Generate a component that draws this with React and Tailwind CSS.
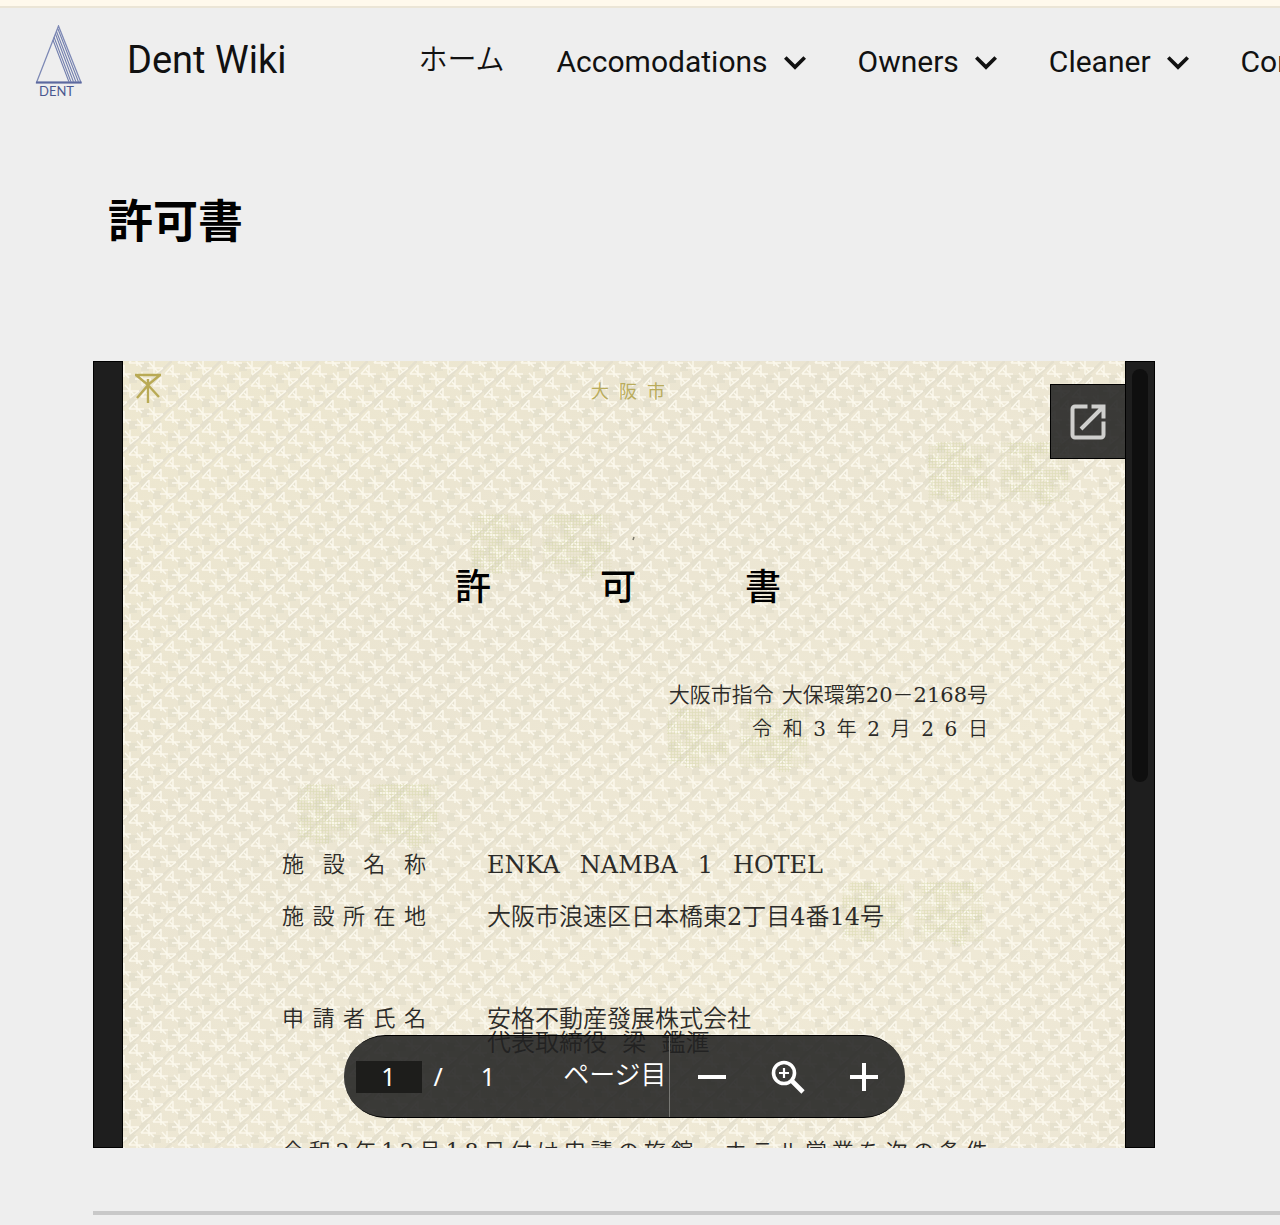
const navItems = [
  { label: 'ホーム', menu: false },
  { label: 'Accomodations', menu: true },
  { label: 'Owners', menu: true },
  { label: 'Cleaner', menu: true },
  { label: 'Contact', menu: true },
]

const watermarks = [
  { x: 345, y: 151 },
  { x: 803, y: 79 },
  { x: 172, y: 421 },
  { x: 542, y: 345 },
  { x: 717, y: 519 },
]

const closing = '令和2年12月18日付け申請の旅館、ホテル営業を次の条件'

function Logo() {
  return (
    <svg viewBox="0 0 48 74" className="mt-[3px] h-[74px] w-12 shrink-0" fill="none" aria-label="DENT">
      <path d="M23.5 1 1.5 57.5H46L23.5 1Z" stroke="#7d89b5" strokeWidth="1.3" />
      <path d="M1 57.5h45.5" stroke="#5c699f" strokeWidth="1.8" />
      <path d="M23 4 43.5 57M21.5 6.5 41 57M20.5 9 38.5 57M19 12 36 57M18 15 34 57" stroke="#7480ae" strokeWidth="1.1" />
      <text x="4" y="71" fill="#4a5890" fontSize="13" fontFamily="Lato, sans-serif">DENT</text>
    </svg>
  )
}

function Chevron() {
  return (
    <svg viewBox="6 8.59 12 7.41" className="mt-1 h-[14px] w-[22px]" fill="currentColor" aria-hidden="true">
      <path d="M7.41 8.59 12 13.17l4.59-4.58L18 10l-6 6-6-6z" />
    </svg>
  )
}

// Evenly distributes characters or words across the available width
function Spread({ parts, className }) {
  return (
    <span className={`flex justify-between ${className}`}>
      {Array.from(parts).map((part, i) => <span key={i}>{part}</span>)}
    </span>
  )
}

function PaperTexture() {
  return (
    <svg className="absolute inset-0 h-full w-full" aria-hidden="true">
      <defs>
        <linearGradient id="paper" x1="0" y1="0" x2="1" y2="1">
          <stop offset="0" stopColor="#eee8d0" />
          <stop offset=".35" stopColor="#ebe5d2" />
          <stop offset=".7" stopColor="#f0ead6" />
          <stop offset="1" stopColor="#ede7d5" />
        </linearGradient>
        <g id="four" fill="none" stroke="#fbf8ec" strokeWidth="1.5">
          <path d="M-7 2H8M1-7V5M1-7-7 2M-2-2 6 6" />
        </g>
        <g id="kay" fill="none" stroke="#fbf8ec" strokeWidth="1.4">
          <path d="M-8 0H8M-1-7V6M8 0-1 7M-6-6 3 4" />
        </g>
        <pattern id="weave" width="49" height="46" patternUnits="userSpaceOnUse">
          <g fill="#e3dfcc" opacity=".7">
            <path d="M18 2h8v8h-8zM30 14h8v8h-8zM6 14h8v8H6zM-4 26h8v8h-8zM45 26h8v8h-8zM18 26h8v8h-8zM30 38h8v8h-8zM6 38h8v8H6z" />
          </g>
          <path d="M-4 50 53-4" stroke="#e5e0ce" strokeWidth="2.6" />
          <use href="#four" x="13" y="46" />
          <use href="#four" x="13" y="0" />
          <use href="#four" x="25" y="34" />
          <use href="#four" x="37" y="23" />
          <use href="#four" x="49" y="11" />
          <use href="#four" x="0" y="11" />
          <use href="#kay" x="32" y="7" />
          <use href="#kay" x="20" y="18" />
          <use href="#kay" x="8" y="30" />
          <use href="#kay" x="45" y="41" />
          <use href="#kay" x="-4" y="41" />
        </pattern>
        <pattern id="hatch" width="3" height="3" patternUnits="userSpaceOnUse">
          <path d="M0 .5h3M.5 0v3" stroke="#ccd197" strokeWidth=".6" />
        </pattern>
        <g id="stamp" fill="url(#hatch)" opacity=".42">
          <path d="M10 2h30v10H10zM2 16h54v12H2zM20 12h14v50H20zM4 34h14v22H4zM36 36h26v12H36z" />
          <path d="M82 2h52v12H82zM96 14h12v16H96zM76 30h66v10H76zM84 44h44v8H84zM112 40h14v26h-14z" />
          <path d="M2 4h62v56H2zM74 2h70v60H74z" opacity=".5" />
        </g>
      </defs>
      <rect width="100%" height="100%" fill="url(#paper)" />
      <rect width="100%" height="100%" fill="url(#weave)" />
      {watermarks.map((w) => <use key={w.x} href="#stamp" x={w.x} y={w.y} />)}
      <path d="m510 179 1-3" stroke="#77756a" strokeWidth="1.5" />
    </svg>
  )
}

function CityMark() {
  return (
    <svg viewBox="0 0 26 30" className="h-[30px] w-[26px]" fill="none" stroke="#b9aa55" strokeWidth="2.4" aria-hidden="true">
      <path d="M0 2h26M1 2l12 10L25 2M13 12 2 25M13 12l11 12M13 6v24" />
    </svg>
  )
}

function Permit() {
  return (
    <article className="relative min-w-0 flex-1 overflow-hidden font-['DejaVu_Serif','Noto_Sans_CJK_JP',serif] font-[350] text-[#2c2b28]">
      <PaperTexture />
      <div className="relative whitespace-nowrap">
        <div className="grid h-[62px] grid-cols-3 items-center px-3 pb-2">
          <CityMark />
          <Spread parts="大阪市" className="ml-2 w-[74px] justify-self-center pt-2 text-lg font-normal text-[#b9ac5c]" />
        </div>

        <h2 className="mt-[140px] flex justify-center pr-3 text-4xl leading-[50px] font-medium text-black">
          <Spread parts="許可書" className="w-[326px]" />
        </h2>

        <div className="flex flex-col items-end pt-[65px] pr-[137px] text-[21px] leading-[34px]">
          <p className="flex gap-2"><span>大阪市指令</span><span>大保環第20－2168号</span></p>
          <Spread parts="令和3年2月26日" className="w-[236px] text-xl leading-[34px]" />
        </div>

        <dl className="grid grid-cols-[144px_1fr] gap-x-[61px] pt-[93px] pl-[159px] text-2xl leading-[52px]">
          <dt><Spread parts="施設名称" className="text-[22px]" /></dt>
          <dd className="flex gap-5"><span>ENKA</span><span>NAMBA</span><span>1</span><span>HOTEL</span></dd>
          <dt><Spread parts="施設所在地" className="text-[22px]" /></dt>
          <dd>大阪市浪速区日本橋東2丁目4番14号</dd>
          <dt className="pt-16 leading-6"><Spread parts="申請者氏名" className="text-[22px]" /></dt>
          <dd className="pt-16 leading-6">安格不動産發展株式会社<br />代表取締役&nbsp;&nbsp;梁&nbsp;&nbsp;鑑滙</dd>
        </dl>

        <Spread parts={closing} className="mt-[84px] mr-[137px] ml-[159px] text-[22px] leading-[26px]" />
      </div>
    </article>
  )
}

function Toolbar() {
  return (
    <div className="absolute inset-x-0 bottom-[30px] flex justify-center">
      <div className="flex h-[83px] w-[561px] items-center rounded-full border-y border-black bg-[#212121]/88 pl-3 font-['Noto_Sans','Noto_Sans_CJK_JP',sans-serif] text-[25px] text-white">
        <input aria-label="ページ" defaultValue="1" className="h-8 w-[66px] bg-[#1d1d1b] text-center outline-none" />
        <span className="ml-3">/</span>
        <span className="ml-[38px]">1</span>
        <span className="ml-[68px] pb-1 text-[26px] font-[350] whitespace-nowrap">ページ目</span>
        <span className="ml-0.5 h-full w-px bg-[#777773]" />
        <div className="flex flex-1 items-center justify-between pr-[26px] pl-7">
          <button aria-label="縮小">
            <svg viewBox="0 0 28 28" className="size-7" stroke="currentColor" strokeWidth="4"><path d="M0 14h28" /></svg>
          </button>
          <button aria-label="ズームをリセット">
            <svg viewBox="0 0 34 34" className="size-[34px]" fill="none" stroke="currentColor">
              <circle cx="13" cy="13" r="10.5" strokeWidth="3.6" />
              <path d="m21 21 11 11" strokeWidth="4.6" />
              <path d="M8 13h10M13 8v10" strokeWidth="2.2" />
            </svg>
          </button>
          <button aria-label="拡大">
            <svg viewBox="0 0 28 28" className="size-7" stroke="currentColor" strokeWidth="4"><path d="M0 14h28M14 0v28" /></svg>
          </button>
        </div>
      </div>
    </div>
  )
}

export default function App() {
  return (
    <div className="min-h-screen overflow-hidden bg-[#eeeeee] font-['Roboto','Noto_Sans_CJK_JP',sans-serif] text-[#111111]">
      <div className="h-2 border-b-2 border-[#ebe5d6] bg-[#fff9ec]" />

      <header className="flex h-[104px] items-center pl-[35px] whitespace-nowrap">
        <Logo />
        <a href="#" className="ml-11 text-[38px]">Dent Wiki</a>
        <nav className="ml-[132px] flex items-center gap-[52px] pt-0.5 text-[30px]">
          {navItems.map((item) => (
            item.menu ? (
              <button key={item.label} className="flex items-center gap-4">
                {item.label}<Chevron />
              </button>
            ) : (
              <a key={item.label} href="#" className="text-[29px] font-[350]">{item.label}</a>
            )
          ))}
        </nav>
      </header>

      <main className="pl-[93px]">
        <h1 className="pt-[76px] pl-[15px] text-[45px] leading-[70px] font-bold text-black">許可書</h1>

        {/* Embedded document viewer */}
        <section className="relative mt-[103px] mr-[125px] flex h-[787px] overflow-hidden">
          <div className="w-[30px] border border-black bg-[#1e1e1e]" />
          <Permit />
          <div className="w-[30px] border border-black bg-[#1e1e1e] px-[6px] pt-[7px]">
            <div className="h-[413px] rounded-full bg-[#0f0f0f]" />
          </div>

          <button aria-label="新しいウィンドウで開く" className="absolute top-[23px] right-[30px] flex size-[75px] items-center justify-center border border-r-0 border-black bg-[#212121]/88 text-[#cfcfcd]">
            <svg viewBox="0 0 36 36" className="size-9" fill="none" stroke="currentColor" strokeWidth="4">
              <path d="M17.5 2.5H5A2.5 2.5 0 0 0 2.5 5v26A2.5 2.5 0 0 0 5 33.5h26a2.5 2.5 0 0 0 2.5-2.5V17.5" />
              <path d="M21.5 2.5h12v12M33 3 11 25" />
            </svg>
          </button>
          <Toolbar />
        </section>

        <hr className="mt-[63px] border-t-4 border-[#c8c8c8]" />
      </main>
    </div>
  )
}
